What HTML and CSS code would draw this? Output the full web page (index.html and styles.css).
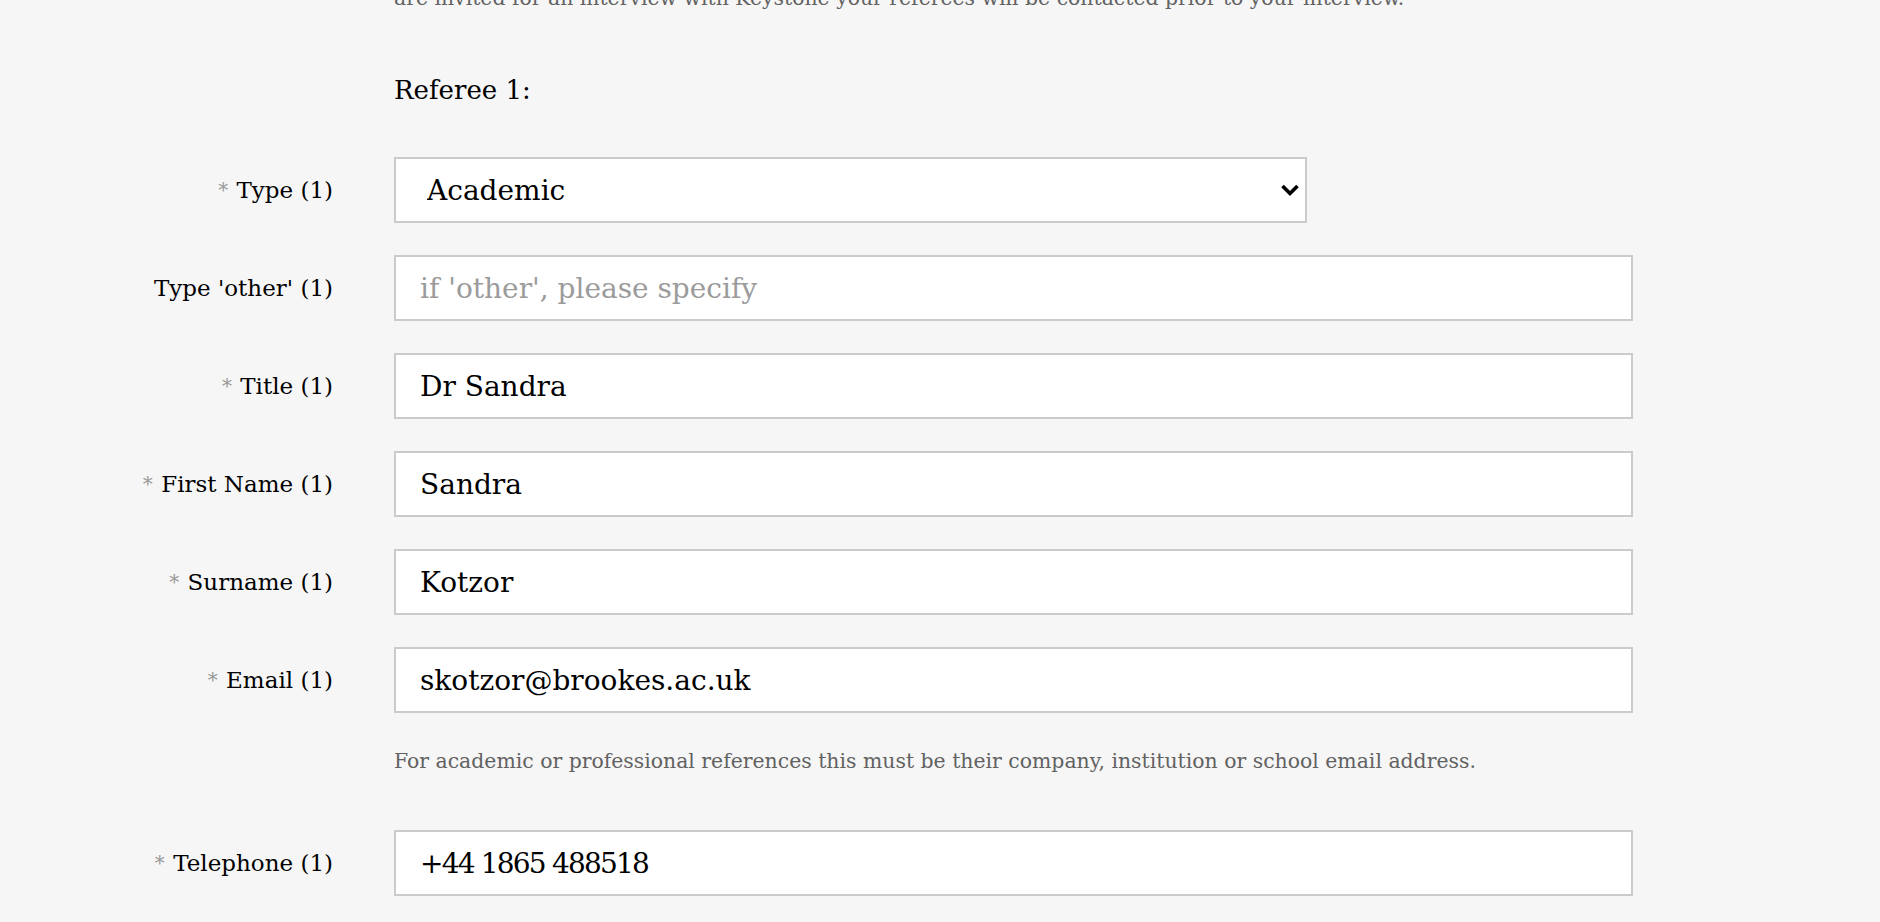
FILE: index.html
```html
<!DOCTYPE html>
<html lang="en">
<head>
<meta charset="utf-8">
<title>Referees</title>
<link rel="stylesheet" href="styles.css">
</head>
<body>
<main class="form">
  <p class="intro">are invited for an interview with Keystone your referees will be contacted prior to your interview.</p>
  <h2 class="heading">Referee 1:</h2>
  <div class="fields">
    <div class="row">
      <label class="label" for="type1"><span class="req">*</span>&nbsp;Type (1)</label>
      <div class="control">
        <div class="select-wrap">
          <select id="type1" class="select">
            <option>Academic</option>
            <option>Professional</option>
            <option>Other</option>
          </select>
          <svg class="chevron" width="20" height="14" viewBox="0 0 20 14" aria-hidden="true"><polyline points="2.5,3 10,10.5 17.5,3" fill="none" stroke="#000" stroke-width="3.6" stroke-linecap="butt" stroke-linejoin="miter"/></svg>
        </div>
      </div>
    </div>
    <div class="row">
      <label class="label" for="other1">Type 'other' (1)</label>
      <div class="control"><input id="other1" class="input" type="text" placeholder="if 'other', please specify"></div>
    </div>
    <div class="row">
      <label class="label" for="title1"><span class="req">*</span>&nbsp;Title (1)</label>
      <div class="control"><input id="title1" class="input" type="text" value="Dr Sandra"></div>
    </div>
    <div class="row">
      <label class="label" for="first1"><span class="req">*</span>&nbsp;First Name (1)</label>
      <div class="control"><input id="first1" class="input" type="text" value="Sandra"></div>
    </div>
    <div class="row">
      <label class="label" for="sur1"><span class="req">*</span>&nbsp;Surname (1)</label>
      <div class="control"><input id="sur1" class="input" type="text" value="Kotzor"></div>
    </div>
    <div class="row">
      <label class="label" for="email1"><span class="req">*</span>&nbsp;Email (1)</label>
      <div class="control">
        <input id="email1" class="input" type="text" value="skotzor@brookes.ac.uk">
        <p class="help">For academic or professional references this must be their company, institution or school email address.</p>
      </div>
    </div>
    <div class="row">
      <label class="label" for="tel1"><span class="req">*</span>&nbsp;Telephone (1)</label>
      <div class="control"><input id="tel1" class="input input--tel" type="text" value="+44 1865 488518"></div>
    </div>
  </div>
</main>
</body>
</html>
```

FILE: styles.css
```css
html, body {
  margin: 0;
  padding: 0;
  background: #f6f6f6;
}

body {
  font-family: "DejaVu Serif", "Liberation Serif", serif;
  color: #000;
  overflow: hidden;
  height: 922px;
}

.form {
  display: flex;
  flex-direction: column;
}

.intro {
  margin: -17px 0 0 394px;
  font-size: 20.4px;
  line-height: 30px;
  color: #626262;
  white-space: nowrap;
}

.heading {
  margin: 62px 0 0 394px;
  font-size: 26px;
  line-height: 31px;
  font-weight: normal;
  color: #000;
}

.fields {
  margin-top: 51px;
  display: flex;
  flex-direction: column;
  gap: 32px;
}

.row {
  display: grid;
  grid-template-columns: 333px 1239px;
  column-gap: 61px;
  align-items: start;
}

.label {
  height: 66px;
  display: flex;
  align-items: center;
  justify-content: flex-end;
  font-size: 23px;
  color: #000;
  white-space: nowrap;
}

.req {
  color: #999;
  font-size: 20px;
  margin-right: 1px;
}

.control {
  display: flex;
  flex-direction: column;
}

.input,
.select {
  box-sizing: border-box;
  height: 66px;
  width: 100%;
  border: 2px solid #cbcbcb;
  border-radius: 0;
  background: #fff;
  font-family: "DejaVu Serif", "Liberation Serif", serif;
  font-size: 28px;
  color: #000;
  padding: 0 24px;
  margin: 0;
  outline: none;
}

.input--tel {
  letter-spacing: -1.8px;
}

.input::placeholder {
  color: #9b9b9b;
  opacity: 1;
}

.select-wrap {
  position: relative;
  width: 913px;
}

.select {
  appearance: none;
  -webkit-appearance: none;
  padding: 0 40px 0 31px;
}

.chevron {
  position: absolute;
  right: 7px;
  top: 26px;
  pointer-events: none;
}

.help {
  margin: 33px 0 22px;
  font-size: 20.4px;
  line-height: 30px;
  color: #626262;
}
```
